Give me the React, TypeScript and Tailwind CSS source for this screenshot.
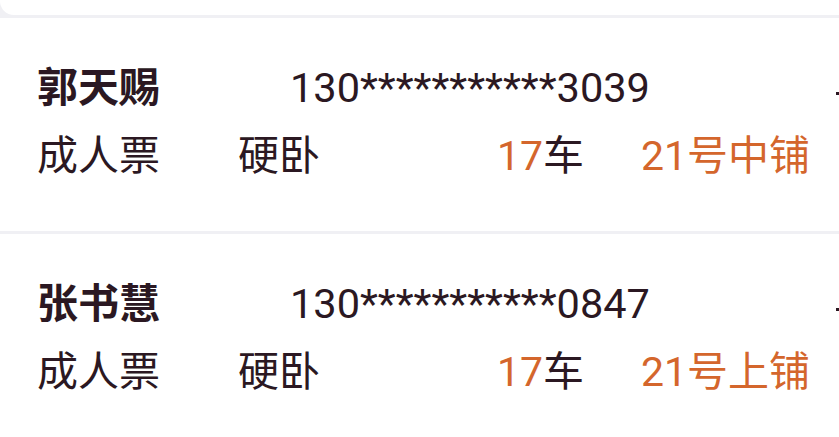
import React from "react";

type P = { name: string; phone: string; type: string; seat: string; car: string; berth: string };

const people: P[] = [
  { name: "郭天赐", phone: "130***********3039", type: "成人票", seat: "硬卧", car: "17", berth: "21号中铺" },
  { name: "张书慧", phone: "130***********0847", type: "成人票", seat: "硬卧", car: "17", berth: "21号上铺" },
];

function Card({ p }: { p: P }) {
  return (
    <div className="bg-white h-[213px] pt-[50px] pl-[37px] relative overflow-hidden">
      <div className="flex items-center h-[40px] leading-[40px]">
        <div className="w-[253px] text-[41px] font-bold text-[#2b1822]">{p.name}</div>
        <div className="text-[41.5px] text-[#2b1822]">{p.phone}</div>
        <div className="ml-auto w-[3px] h-[3px] bg-[#2b1822] mt-[10px]" />
      </div>
      <div className="flex items-center h-[40px] leading-[40px] mt-[28px] text-[41px] text-[#2b1822]">
        <div className="w-[201px]">{p.type}</div>
        <div className="w-[259px]">{p.seat}</div>
        <div className="w-[144px]">
          <span className="text-[#d4662c]">{p.car}</span>车
        </div>
        <div className="text-[#d4662c]">{p.berth}</div>
      </div>
    </div>
  );
}

export default function App() {
  return (
    <div
      className="w-[839px] h-[437px] bg-[#f0f0f4] overflow-hidden"
      style={{ fontFamily: "Roboto, 'Noto Sans CJK SC', sans-serif" }}
    >
      <div className="h-[15px] bg-white rounded-bl-[14px]" />
      <div className="mt-[3px] flex flex-col gap-[3px]">
        {people.map((p) => (
          <Card key={p.name} p={p} />
        ))}
      </div>
    </div>
  );
}
